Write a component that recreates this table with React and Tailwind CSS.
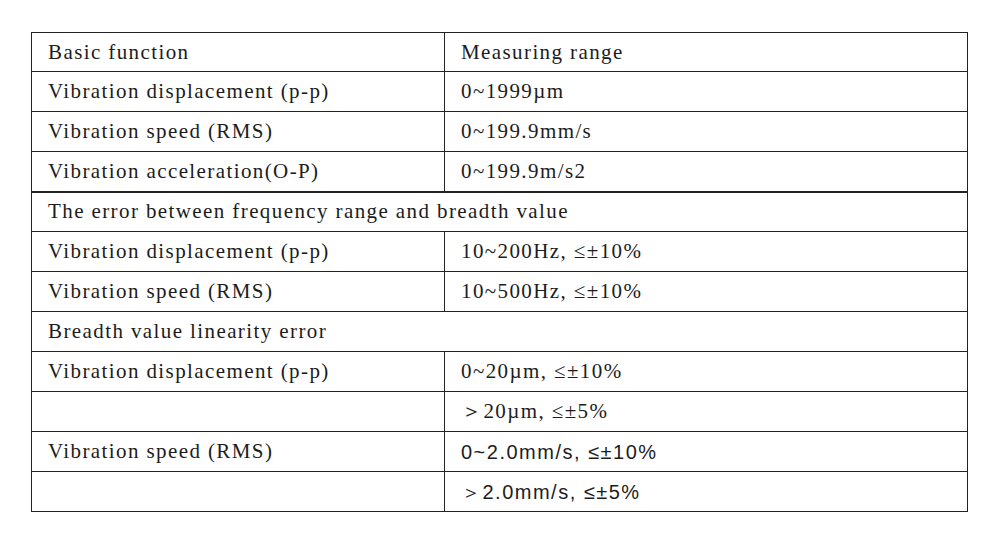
import React from 'react';

// Spec table rows
const ROWS = [
  { l: 'Basic function', r: 'Measuring range' },
  { l: 'Vibration displacement (p-p)', r: '0~1999\u00b5m' },
  { l: 'Vibration speed (RMS)', r: '0~199.9mm/s' },
  { l: 'Vibration acceleration(O-P)', r: '0~199.9m/s2' },
  { span: 'The error between frequency range and breadth value', thickTop: true },
  { l: 'Vibration displacement (p-p)', r: '10~200Hz, \u2264\u00b110%' },
  { l: 'Vibration speed (RMS)', r: '10~500Hz, \u2264\u00b110%' },
  { span: 'Breadth value linearity error' },
  { l: 'Vibration displacement (p-p)', r: '0~20\u00b5m, \u2264\u00b110%' },
  { l: '', r: '\uff1e20\u00b5m, \u2264\u00b15%' },
  { l: 'Vibration speed (RMS)', r: '0~2.0mm/s, \u2264\u00b110%', sans: true },
  { l: '', r: '\uff1e2.0mm/s, \u2264\u00b15%', sans: true },
];

export default function App() {
  return (
    <div className="w-[1000px] h-[545px] bg-white pt-[32px] pl-[31px]">
      <table
        className="table-fixed border-collapse w-[937px] text-[#1c1c1c] text-[21px] tracking-[1.4px]"
        style={{ fontFamily: '"Liberation Serif", "DejaVu Serif", serif' }}
      >
        <colgroup>
          <col className="w-[413px]" />
          <col />
        </colgroup>
        <tbody>
          {ROWS.map((row, i) => {
            const top = row.thickTop ? 'border-t-2' : 'border-t';
            if (row.span) {
              return (
                <tr key={i} className="h-[40px]">
                  <td colSpan={2} className={`border border-[#222] ${top} pl-[16px] leading-none whitespace-nowrap`}>
                    {row.span}
                  </td>
                </tr>
              );
            }
            return (
              <tr key={i} className={i === 0 ? 'h-[39px]' : 'h-[40px]'}>
                <td className={`border border-[#222] ${top} pl-[16px] leading-none whitespace-nowrap`}>{row.l}</td>
                <td
                  className={`border border-[#222] ${top} pl-[16px] leading-none whitespace-nowrap ${
                    row.sans ? 'text-[20px] tracking-[1.5px]' : ''
                  }`}
                  style={row.sans ? { fontFamily: '"Liberation Sans", Arial, sans-serif' } : undefined}
                >
                  {row.r}
                </td>
              </tr>
            );
          })}
        </tbody>
      </table>
    </div>
  );
}
